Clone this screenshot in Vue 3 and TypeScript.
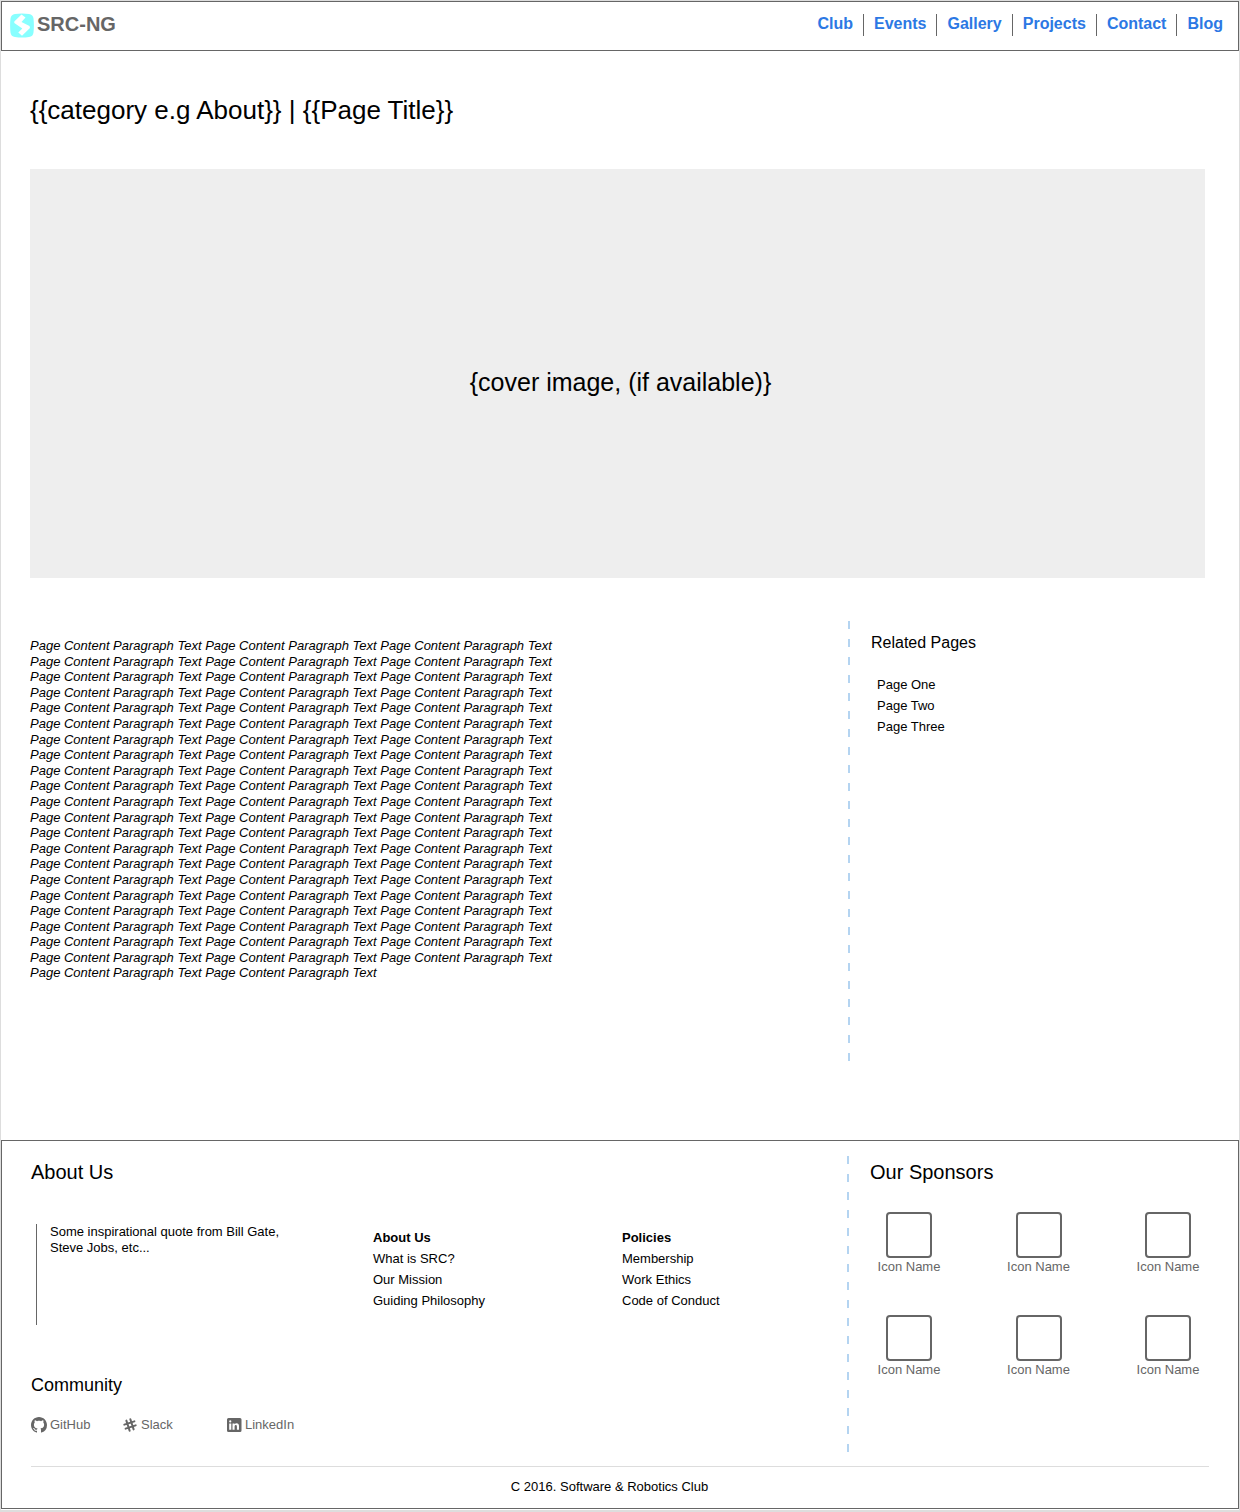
<script setup lang="ts">
interface LinkGroup {
  title: string
  links: string[]
}

const navLinks: string[] = ['Club', 'Events', 'Gallery', 'Projects', 'Contact', 'Blog']
const relatedPages: string[] = ['Page One', 'Page Two', 'Page Three']
const linkGroups: LinkGroup[] = [
  { title: 'About Us', links: ['What is SRC?', 'Our Mission', 'Guiding Philosophy'] },
  { title: 'Policies', links: ['Membership', 'Work Ethics', 'Code of Conduct'] },
]
const sponsors: string[] = Array.from({ length: 6 }, () => 'Icon Name')

const pageHeading = '{{category e.g About}} | {{Page Title}}'
const coverLabel = '{cover image, (if available)}'
const bodyText: string = Array.from({ length: 65 }, () => 'Page Content Paragraph Text').join(' ')
</script>

<template>
  <div class="page">
    <header class="site-header">
      <a class="brand" href="#">
        <svg class="brand-mark" viewBox="0 0 24 25" aria-hidden="true">
          <path fill="#8ff" d="M5 1 Q12 0 19 1 Q23 1.500 23.500 5.500 Q24.300 12.500 23.500 19.500 Q23 23.500 19 24 Q12 25 5 24 Q1 23.500 0.500 19.500 Q-0.300 12.500 0.500 5.500 Q1 1.500 5 1Z" />
          <path fill="#fff" d="M11.500 1.500 L15.500 4.500 L11.500 9 L19.500 13 L20 15 L12 22.800 L8.300 19.500 L12.300 15.500 L4.300 10 V8.500Z" />
        </svg>
        <span>SRC-NG</span>
      </a>
      <nav class="main-nav">
        <a v-for="link in navLinks" :key="link" href="#">{{ link }}</a>
      </nav>
    </header>

    <main class="content">
      <h1>{{ pageHeading }}</h1>
      <div class="cover">{{ coverLabel }}</div>
      <div class="columns">
        <article>
          <p>{{ bodyText }}</p>
        </article>
        <aside class="side related">
          <h2>Related Pages</h2>
          <ul>
            <li v-for="page in relatedPages" :key="page"><a href="#">{{ page }}</a></li>
          </ul>
        </aside>
      </div>
    </main>

    <footer class="site-footer">
      <div class="columns">
        <div class="footer-main">
          <h2>About Us</h2>
          <div class="about-row">
            <blockquote>Some inspirational quote from Bill Gate, Steve Jobs, etc...</blockquote>
            <section v-for="group in linkGroups" :key="group.title" class="link-group">
              <h3>{{ group.title }}</h3>
              <ul>
                <li v-for="link in group.links" :key="link"><a href="#">{{ link }}</a></li>
              </ul>
            </section>
          </div>
          <h2 class="community-title">Community</h2>
          <div class="social">
            <a href="#">
              <svg viewBox="0 0 16 16" aria-hidden="true">
                <path d="M8 0C3.58 0 0 3.58 0 8c0 3.54 2.29 6.53 5.47 7.59.4.07.55-.17.55-.38 0-.19-.01-.82-.01-1.49-2.01.37-2.53-.49-2.69-.94-.09-.23-.48-.94-.82-1.13-.28-.15-.68-.52-.01-.53.63-.01 1.08.58 1.23.82.72 1.21 1.87.87 2.33.66.07-.52.28-.87.51-1.07-1.78-.2-3.64-.89-3.64-3.95 0-.87.31-1.59.82-2.15-.08-.2-.36-1.02.08-2.12 0 0 .67-.21 2.2.82.64-.18 1.32-.27 2-.27s1.36.09 2 .27c1.53-1.04 2.2-.82 2.2-.82.44 1.1.16 1.92.08 2.12.51.56.82 1.27.82 2.15 0 3.07-1.87 3.75-3.65 3.95.29.25.54.73.54 1.48 0 1.07-.01 1.93-.01 2.2 0 .21.15.46.55.38A8.01 8.01 0 0 0 16 8c0-4.42-3.58-8-8-8Z" />
              </svg>
              <span>GitHub</span>
            </a>
            <a href="#">
              <svg viewBox="0 0 16 16" aria-hidden="true">
                <g class="strokes" transform="rotate(-18 8 8)">
                  <path d="M5.9 2.7V13.3M10.1 2.7V13.3M2.7 5.9H13.3M2.7 10.1H13.3" />
                </g>
              </svg>
              <span>Slack</span>
            </a>
            <a href="#">
              <svg viewBox="0 0 16 16" aria-hidden="true">
                <path fill-rule="evenodd" d="M3 1H14Q15.500 1 15.500 2.500V13.500Q15.500 15 14 15H2.500Q1 15 1 13.500V2.500Q1 1 2.500 1ZM3.200 6.400V12.700H5.300V6.400ZM4.250 3.300A1.100 1.100 0 1 0 4.250 5.500A1.100 1.100 0 1 0 4.250 3.300ZM6.500 6.400V12.700H8.600V9.200Q8.700 8 9.800 8Q10.900 8 10.900 9.400V12.700H13V9.100Q13 6.200 10.600 6.200Q9.300 6.200 8.600 7.300V6.400Z" />
              </svg>
              <span>LinkedIn</span>
            </a>
          </div>
        </div>
        <aside class="side sponsors">
          <h2>Our Sponsors</h2>
          <div class="sponsor-grid">
            <a v-for="(name, index) in sponsors" :key="index" href="#">
              <span class="sponsor-icon"></span>
              <span>{{ name }}</span>
            </a>
          </div>
        </aside>
      </div>
      <p class="copyright">C 2016. Software &amp; Robotics Club</p>
    </footer>
  </div>
</template>

<style>
body {
  margin: 0;
  background: #fff;
}
</style>

<style scoped>
.page {
  box-sizing: border-box;
  padding-bottom: 1px;
  border: 1px solid #ddd;
  border-bottom-width: 2px;
  background: #fff;
  color: #000;
  font-family: "Liberation Sans", Arial, sans-serif;
  font-size: 13px;
  line-height: 16px;
}

h1,
h2,
h3,
p,
ul,
blockquote {
  margin: 0;
  padding: 0;
  font-weight: 400;
}

ul {
  list-style: none;
}

a {
  color: inherit;
  text-decoration: none;
}

.site-header {
  display: flex;
  justify-content: space-between;
  align-items: flex-start;
  padding: 11px 5px 12px 8px;
  border: 1px solid #666;
}

.brand {
  display: flex;
  gap: 3px;
  color: #666;
  font-size: 20px;
  font-weight: 700;
  line-height: 22px;
}

.brand-mark {
  width: 24px;
  height: 25px;
}

.main-nav {
  display: flex;
  padding-top: 1px;
  color: #2c78e4;
  font-size: 16px;
  font-weight: 700;
  line-height: 20px;
}

.main-nav a {
  height: 22px;
  padding: 0 10px;
}

.main-nav a + a {
  border-left: 1px solid #666;
}

.content {
  padding: 44px 34px 79px 29px;
}

h1 {
  font-size: 26px;
  line-height: 30px;
}

.cover {
  display: flex;
  justify-content: center;
  align-items: center;
  box-sizing: border-box;
  min-height: 409px;
  margin: 44px 0 43px;
  padding: 16px 0 0 6px;
  background: #eee;
  font-size: 25px;
  line-height: 30px;
}

.columns {
  display: flex;
}

article {
  flex: 1;
  padding-top: 17px;
}

article p {
  max-width: 540px;
  font-style: italic;
  line-height: 1.2;
}

.side {
  box-sizing: border-box;
  padding-left: 23px;
  background: repeating-linear-gradient(#b4d4f1 0 8px, transparent 8px 18px) left top / 2px 100% no-repeat;
}

.related {
  width: 357px;
  min-height: 440px;
  padding-top: 12px;
}

.related h2 {
  font-size: 16px;
  line-height: 20px;
}

.related ul {
  margin-top: 21px;
  padding-left: 6px;
  line-height: 21px;
}

.site-footer {
  padding: 15px 29px 11px;
  border: 1px solid #666;
}

.site-footer h2 {
  font-size: 20px;
  line-height: 24px;
}

.footer-main {
  flex: 1;
  padding-top: 4px;
}

.about-row {
  display: grid;
  grid-template-columns: 342fr 249fr 225fr;
  min-height: 101px;
  margin-top: 40px;
}

blockquote {
  box-sizing: border-box;
  max-width: 260px;
  margin-left: 5px;
  padding-left: 13px;
  border-left: 1px solid #666;
}

.link-group {
  padding-top: 3px;
  line-height: 21px;
}

h3 {
  font-size: 13px;
  font-weight: 700;
}

.site-footer .community-title {
  margin-top: 48px;
  font-size: 18px;
}

.social {
  display: grid;
  grid-template-columns: 91px 104px 1fr;
  margin-top: 18px;
  color: #666;
}

.social a {
  display: flex;
  align-items: center;
  gap: 3px;
  line-height: 20px;
}

.social svg {
  width: 16px;
  height: 16px;
  fill: currentColor;
}

.strokes {
  fill: none;
  stroke: currentColor;
  stroke-width: 2;
  stroke-linecap: round;
}

.sponsors {
  width: 362px;
  min-height: 296px;
  padding-top: 4px;
}

.sponsor-grid {
  display: grid;
  grid-template-columns: repeat(3, 64px);
  justify-content: space-between;
  row-gap: 40px;
  margin: 28px 9px 0 7px;
  color: #666;
}

.sponsor-grid a {
  display: flex;
  flex-direction: column;
  align-items: center;
  gap: 1px;
}

.sponsor-icon {
  box-sizing: border-box;
  width: 46px;
  height: 46px;
  border: 2px solid #666;
  border-radius: 4px;
}

.copyright {
  margin-top: 14px;
  padding: 10px 21px 0 0;
  border-top: 1px solid #ddd;
  line-height: 20px;
  text-align: center;
}
</style>
